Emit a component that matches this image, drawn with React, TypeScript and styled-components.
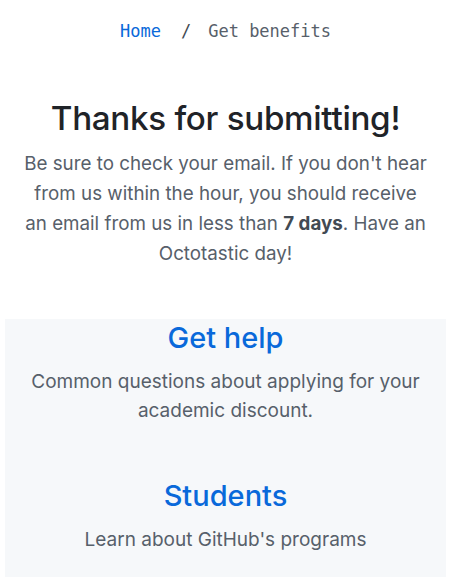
import React from "react";
import styled, { createGlobalStyle } from "styled-components";

const Global = createGlobalStyle`
  html, body { margin: 0; padding: 0; background: #ffffff; }
  body { font-family: Inter, "Noto Sans", sans-serif; }
`;

const Page = styled.div`
  width: 451px;
  display: flex;
  flex-direction: column;
  align-items: center;
`;

const Crumbs = styled.nav`
  display: flex;
  justify-content: center;
  padding-top: 19px;
  font-family: "DejaVu Sans Mono", monospace;
  font-size: 17px;
  line-height: 24px;
  color: #57606a;
`;

const CrumbLink = styled.a`
  color: #0969da;
  text-decoration: none;
`;

const Divider = styled.span`
  margin: 0 17px 0 20px;
  color: #424a53;
`;

const Hero = styled.section`
  display: flex;
  flex-direction: column;
  align-items: center;
  text-align: center;
  padding: 53px 0 0;
`;

const Title = styled.h1`
  margin: 0;
  font-size: 33.2px;
  font-weight: 500;
  line-height: 44px;
  color: #1f2328;
  letter-spacing: -0.3px;
`;

const Lead = styled.p`
  margin: 9px 0 0;
  max-width: 403px;
  font-size: 18.8px;
  line-height: 30px;
  color: #57606a;
  b { color: #424a53; font-weight: 700; }
`;

const Help = styled.section`
  align-self: stretch;
  margin: 50px 5px 0 5px;
  background: #f6f8fa;
  display: flex;
  flex-direction: column;
  align-items: center;
  text-align: center;
  padding: 0 16px 24px;
  gap: 52px;
`;

const Item = styled.div`
  display: flex;
  flex-direction: column;
  align-items: center;
`;

const ItemTitle = styled.a`
  font-size: 29px;
  font-weight: 500;
  line-height: 38px;
  color: #0969da;
  text-decoration: none;
`;

const ItemText = styled.p`
  margin: 10px 0 0;
  font-size: 19px;
  line-height: 29px;
  color: #57606a;
`;

export default function App() {
  return (
    <Page>
      <Global />
      <Crumbs>
        <CrumbLink href="#">Home</CrumbLink>
        <Divider>/</Divider>
        <span>Get benefits</span>
      </Crumbs>
      <Hero>
        <Title>Thanks for submitting!</Title>
        <Lead>
          Be sure to check your email. If you don't hear from us within the hour, you should receive an email from us in less than <b>7 days</b>. Have an Octotastic day!
        </Lead>
      </Hero>
      <Help>
        <Item>
          <ItemTitle href="#">Get help</ItemTitle>
          <ItemText>Common questions about applying for your academic discount.</ItemText>
        </Item>
        <Item>
          <ItemTitle href="#">Students</ItemTitle>
          <ItemText>Learn about GitHub's programs</ItemText>
        </Item>
      </Help>
    </Page>
  );
}
